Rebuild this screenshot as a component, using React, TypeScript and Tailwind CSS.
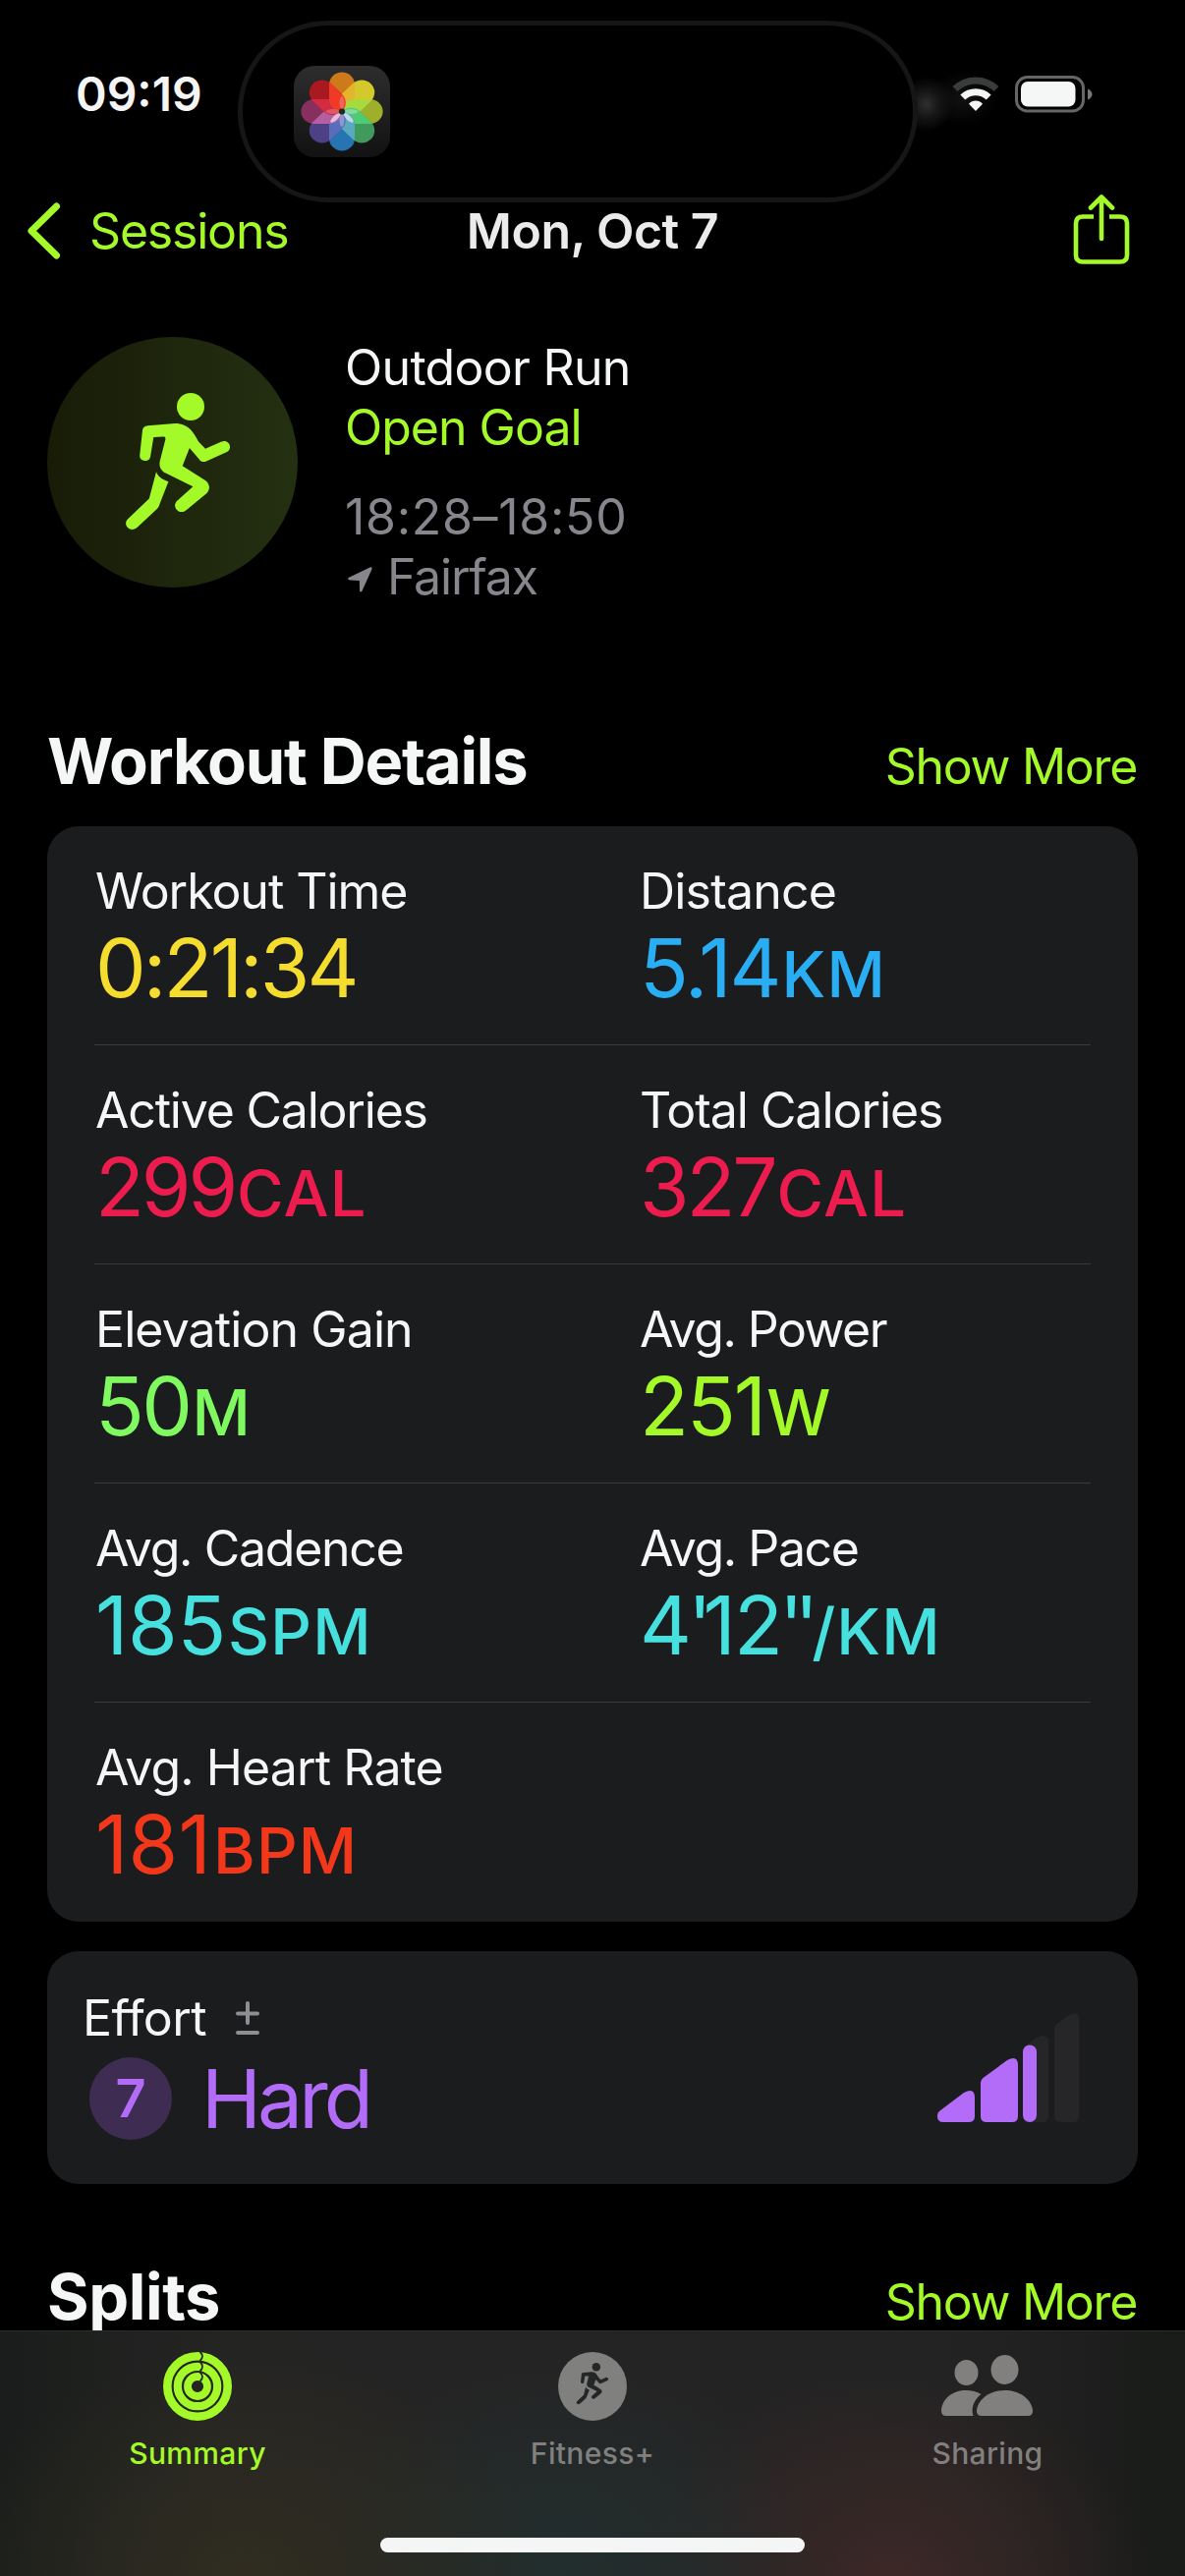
type Metric = {
  label: string;
  value: string;
  unit?: string;
  color: string;
  labelTracking?: string;
  valueTracking?: string;
};

const metricRows: Metric[][] = [
  [
    { label: "Workout Time", value: "0:21:34", color: "text-[#f5dd2f]", valueTracking: "tracking-[-2.9px]" },
    { label: "Distance", value: "5.14", unit: "KM", color: "text-[#29aef3]", labelTracking: "tracking-[-0.8px]" },
  ],
  [
    {
      label: "Active Calories",
      value: "299",
      unit: "CAL",
      color: "text-[#ec1c4f]",
      labelTracking: "tracking-[-1.2px]",
      valueTracking: "tracking-[-3.2px]",
    },
    { label: "Total Calories", value: "327", unit: "CAL", color: "text-[#ec1c4f]", valueTracking: "tracking-[-3.2px]" },
  ],
  [
    {
      label: "Elevation Gain",
      value: "50",
      unit: "M",
      color: "text-[#80f860]",
      labelTracking: "tracking-[-0.9px]",
      valueTracking: "tracking-[-2.6px]",
    },
    {
      label: "Avg. Power",
      value: "251",
      unit: "W",
      color: "text-[#a4f928]",
      labelTracking: "tracking-[-1.5px]",
    },
  ],
  [
    {
      label: "Avg. Cadence",
      value: "185",
      unit: "SPM",
      color: "text-[#46e1df]",
      labelTracking: "tracking-[-1.3px]",
      valueTracking: "tracking-[-0.3px]",
    },
    {
      label: "Avg. Pace",
      value: "4'12''",
      unit: "/KM",
      color: "text-[#46e1df]",
      labelTracking: "tracking-[-1.4px]",
    },
  ],
  [
    {
      label: "Avg. Heart Rate",
      value: "181",
      unit: "BPM",
      color: "text-[#f3371b]",
      labelTracking: "tracking-[-0.9px]",
      valueTracking: "tracking-[0.2px]",
    },
  ],
];

// "overlap" is the lens shared with the next petal clockwise
const petals = [
  { angle: 0, color: "#cf7a1a", overlap: "#e3b42e", shine: 0.22 },
  { angle: 45, color: "#d5c82a", overlap: "#a6da3e", shine: 0 },
  { angle: 90, color: "#9fae2b", overlap: "#4fcb72", shine: 0.3 },
  { angle: 135, color: "#3f9a5c", overlap: "#5ba9bf", shine: 0.6 },
  { angle: 180, color: "#2674b2", overlap: "#5a6dbb", shine: 0.3 },
  { angle: 225, color: "#4d4084", overlap: "#b45fa2", shine: 0.6 },
  { angle: 270, color: "#87305f", overlap: "#d22b42", shine: 0.22 },
  { angle: 315, color: "#a81a20", overlap: "#ef3b26", shine: 0 },
];

function PhotosIcon() {
  return (
    <svg width="98" height="93" viewBox="0 0 98 93">
      <defs>
        <linearGradient id="tile" x1="0" y1="0" x2="0" y2="1">
          <stop offset="0" stopColor="#2d2d2d" />
          <stop offset="1" stopColor="#121212" />
        </linearGradient>
        <clipPath id="next-petal">
          <rect x="-12.5" y="-40" width="25" height="40" rx="12.5" transform="rotate(45)" />
        </clipPath>
      </defs>
      <rect width="98" height="93" rx="21" fill="url(#tile)" />
      <g transform="translate(49 46.5) scale(1.04 1)">
        {petals.map((p) => (
          <rect key={p.angle} x="-12.5" y="-40" width="25" height="40" rx="12.5" fill={p.color} transform={`rotate(${p.angle})`} />
        ))}
        {petals.map((p) => (
          <g key={p.angle} transform={`rotate(${p.angle})`}>
            <rect x="-12.5" y="-40" width="25" height="40" rx="12.5" fill={p.overlap} clipPath="url(#next-petal)" />
          </g>
        ))}
        {petals.map((p) => (
          <ellipse
            key={p.angle}
            cy="-9"
            rx="2.4"
            ry="6.5"
            fill="#fff"
            fillOpacity={p.shine}
            transform={`rotate(${p.angle})`}
          />
        ))}
        <circle r="3" fill="#1c2a26" />
      </g>
    </svg>
  );
}

function RunnerShape() {
  return (
    <>
      <circle cx="146" cy="71" r="14" />
      <path d="M102.5 90.3 L130 88 C137 88 143 90.5 147 95.5 C150 99 152 103 154 106.500 L161 113.700 L177.500 106.500 C182 104.500 186.500 108 186 112.500 C185.700 115 184.500 116.200 182.400 117.300 L162 126.500 C159 127.800 156.500 127 154.700 124.500 L144.900 113 L137.700 131.300 L161 146 C165.500 149.500 166.300 154.500 162.500 159 L142.500 175.500 C139 179 134 178.800 131.500 175.500 C129.300 172.500 129.800 169.500 132 167 L148.400 152.300 L118.500 137.500 C114.500 134 113.800 130.500 114.800 126 L120.300 104.500 C120.600 102.200 120 101.300 118 101.400 L108.300 102 L105 122 C104.300 125 102.300 126.300 99.500 126 C96 125.700 94 123.500 94.200 120.500 L97 95 C97.400 92.200 99 90.600 102.500 90.300 Z" />
      <path d="M111 137.300 C112.500 141.500 116.500 145 123.400 147.300 L114.500 170 C114 172 113 173.600 111.800 175 L92 193.500 C88.700 196.800 84 196.600 81.500 193.500 C79.300 190.800 79.700 187.500 82.400 185 L103.800 164.500 Z" />
    </>
  );
}

function StatusIcons() {
  return (
    <div className="flex items-center">
      <svg width="48" height="36" viewBox="0 0 48 36" fill="none">
        <path d="M3 12.500 A30 30 0 0 1 45 12.500" stroke="#3a3b3b" strokeWidth="7" />
        <path d="M10.800 21 A19 19 0 0 1 37.200 21" stroke="#f5f5f5" strokeWidth="7" />
        <path d="M24 35 L17 27.700 A9.500 9.500 0 0 1 31 27.700 Z" fill="#f5f5f5" />
      </svg>
      <svg className="ml-4" width="79" height="38" viewBox="0 0 79 38">
        <rect x="1.500" y="1.500" width="68" height="34.500" rx="11" fill="none" stroke="#666" strokeWidth="3" />
        <rect x="6" y="6" width="55.500" height="25.500" rx="7" fill="#f5f6f6" />
        <path d="M74 13.500 C80 16 80 22 74 24.500 Z" fill="#777" />
      </svg>
    </div>
  );
}

function StatusBar() {
  return (
    <div className="relative h-[176px] shrink-0 flex items-start justify-between pl-[77px] pr-[94px] pt-[66px]">
      <span className="text-[48px] leading-[60px] font-semibold text-[#f5f5f5] tracking-[0px]">09:19</span>
      <div className="pt-[11px]">
        <div className="absolute left-[905px] top-[68px] w-[76px] h-[76px] bg-[radial-gradient(circle,#2f2f2f_0%,#151515_26%,transparent_52%)]" />
        <div className="absolute left-[945px] top-[72px] w-[70px] h-[56px] bg-[radial-gradient(ellipse,#121212_0%,transparent_70%)]" />
        <div className="relative">
          <StatusIcons />
        </div>
      </div>
      <div className="absolute left-[242px] top-[21px] w-[692px] h-[185px] rounded-[92px] border-[5px] border-[#151617] bg-black flex items-center pl-[52px]">
        <PhotosIcon />
      </div>
    </div>
  );
}

function NavBar() {
  return (
    <header className="relative grid grid-cols-3 items-center h-[118px] shrink-0 pl-[28px] pr-[56px]">
      <button type="button" className="flex items-center text-[#a4f928]">
        <svg width="34" height="58" viewBox="0 0 34 58" fill="none" stroke="currentColor" strokeWidth="7" strokeLinecap="round" strokeLinejoin="round">
          <path d="M29.500 4 L4 29 L29.500 54" />
        </svg>
        <span className="ml-[29px] text-[50px] leading-[60px] tracking-[-1.2px]">Sessions</span>
      </button>
      <h1 className="pl-[28px] text-center text-[50px] leading-[60px] font-semibold tracking-[-0.5px] text-[#ebebeb] whitespace-nowrap">
        Mon, Oct 7
      </h1>
      <svg className="justify-self-end mb-[2px]" width="58" height="72" viewBox="0 0 58 72" fill="none" stroke="#a4f928" strokeWidth="4.600" strokeLinecap="round" strokeLinejoin="round">
        <path d="M21 22.500 H10 Q3 22.500 3 29.500 V61.500 Q3 68.500 10 68.500 H48 Q55 68.500 55 61.500 V29.500 Q55 22.500 48 22.500 H37" strokeLinecap="butt" />
        <path d="M29 45 V3 M18 13.500 L29 2.500 L40 13.500" />
      </svg>
    </header>
  );
}

function WorkoutHero() {
  return (
    <section className="mt-[49px] flex gap-12 px-12 text-[50px] leading-[61px]">
      <div className="size-[255px] rounded-full bg-gradient-to-r from-[#181c07] to-[#243012]">
        <svg width="255" height="255" viewBox="0 0 255 255" fill="#a4f928">
          <RunnerShape />
        </svg>
      </div>
      <div className="pt-px text-[#87868d]">
        <p className="text-[#f5f6f6] tracking-[-0.7px]">Outdoor Run</p>
        <p className="text-[#a4f928] tracking-[-1px]">Open Goal</p>
        <p className="mt-[30px] tracking-[0.7px]">18:28–18:50</p>
        <p className="flex items-center tracking-[-1.2px]">
          <svg className="ml-[3px] mr-[15px] mt-[5px]" width="25" height="26" viewBox="0 0 25 26" fill="currentColor">
            <path d="M22.500 0.500 C24 0 25 1 24.400 2.500 L14.500 24.500 C13.800 26 12 25.700 12 24 L11.800 14 L2 13.500 C0 13.500 -0.500 11.500 1.200 10.700 Z" />
          </svg>
          Fairfax
        </p>
      </div>
    </section>
  );
}

function SectionHeader({ title, tracking }: { title: string; tracking: string }) {
  return (
    <div className="flex items-baseline justify-between pl-[48px] pr-[49px] whitespace-nowrap">
      <h2 className={`text-[65px] leading-[78px] font-bold text-[#f5f6f6] ${tracking}`}>{title}</h2>
      <button type="button" className="text-[50px] leading-[60px] tracking-[-1.3px] text-[#a4f928]">
        Show More
      </button>
    </div>
  );
}

function MetricCell({ metric }: { metric: Metric }) {
  return (
    <div className="pt-[36px] whitespace-nowrap">
      <p className={`text-[50px] leading-[60px] text-[#f5f6f6] ${metric.labelTracking ?? "tracking-[-1.05px]"}`}>
        {metric.label}
      </p>
      <p className={`mt-[7px] text-[82px] leading-[84px] ${metric.valueTracking ?? "tracking-[-2px]"} ${metric.color}`}>
        {metric.value.split(/('+)/).map((part, i) =>
          part.startsWith("'") ? (
            <span key={i} className="-ml-[2px] tracking-[-9px]">
              {part}
            </span>
          ) : (
            part
          )
        )}
        {metric.unit && <span className="ml-[2px] text-[65px] font-medium tracking-[1.2px]">{metric.unit}</span>}
      </p>
    </div>
  );
}

function EffortCard() {
  return (
    <section className="mx-12 mt-[30px] flex h-[237px] shrink-0 items-start justify-between rounded-[32px] bg-[#1b1c1e] pl-[36px] pr-[60px]">
      <div className="pt-[38px]">
        <div className="flex items-center text-[#f5f6f6]">
          <span className="text-[50px] leading-[60px] tracking-[-0.6px]">Effort</span>
          <svg className="ml-[29px]" width="26" height="36" viewBox="0 0 26 36" stroke="#8e8e93" strokeWidth="4" strokeLinecap="round">
            <path d="M13 3 V23 M3 13.500 H23 M3 33 H23" />
          </svg>
        </div>
        <div className="mt-[10px] flex items-start text-[#b26cf7]">
          <span className="ml-[7px] flex size-[84px] items-center justify-center rounded-full bg-[#3f2c52] text-[54px] leading-none font-semibold">
            7
          </span>
          <span className="ml-[30px] mt-px text-[82px] leading-[84px] tracking-[-3.9px]">Hard</span>
        </div>
      </div>
      <svg className="mt-[63px]" width="144" height="111" viewBox="0 0 144 111">
        <g fill="#262628">
          <path d="M88 34 L101 25 Q113 19 113 31 V105 Q113 111 107 111 H88 Z" />
          <path d="M119 16 Q119 13 121.500 11 L134 2 Q144 -3 144 7 V105 Q144 111 138 111 H125 Q119 111 119 105 Z" />
        </g>
        <g fill="#b26cf7">
          <path d="M0 104 Q0 101 2.500 99.500 L27 81 Q38 75 38 86 V105 Q38 111 32 111 H6 Q0 111 0 105 Z" />
          <path d="M44 71 Q44 68 46.500 66 L71 48 Q82 42.500 82 53 V105 Q82 111 76 111 H50 Q44 111 44 105 Z" />
          <rect x="87" y="32.500" width="14" height="78.500" rx="7" />
        </g>
      </svg>
    </section>
  );
}

function RingsIcon() {
  return (
    <svg width="70" height="70" viewBox="0 0 70 70" fill="none">
      <g stroke="#a4f928">
        <circle cx="35" cy="35" r="30.700" strokeWidth="8.600" />
        <circle cx="35" cy="35" r="20.200" strokeWidth="8.200" />
        <circle cx="35" cy="35" r="10" strokeWidth="7.800" />
      </g>
      <g stroke="#262623" strokeWidth="1.800">
        <path d="M37.500 0 Q42.500 4 37.500 9" />
        <path d="M37.500 10 Q42.500 14.500 37.500 19.500" />
        <path d="M37.500 20.500 Q42.500 25 37.500 30" />
      </g>
    </svg>
  );
}

function FitnessIcon() {
  return (
    <svg width="70" height="70" viewBox="0 0 70 70">
      <circle cx="35" cy="35" r="35" fill="#80807f" />
      <g fill="#242627" transform="translate(-5.700 -6.500) scale(0.305)">
        <RunnerShape />
      </g>
    </svg>
  );
}

function SharingIcon() {
  return (
    <svg width="94" height="64" viewBox="0 0 94 64" fill="#82807f">
      <ellipse cx="25.500" cy="18" rx="12" ry="13" />
      <ellipse cx="64.500" cy="15" rx="14" ry="15" />
      <path d="M5 62 Q0 62 0 56.500 C1 44 12 36 25 36 C31 36 36 37.500 40.500 40 C33 46 30 54 32.500 62 Z" />
      <path d="M41 62 Q35.500 62 36 56 C38 44 50 36 64.500 36 C79 36 91 44 93 56 Q93.500 62 88 62 Z" />
    </svg>
  );
}

const tabs = [
  { label: "Summary", icon: <RingsIcon />, color: "text-[#a4f928]" },
  { label: "Fitness+", icon: <FitnessIcon />, color: "text-[#80807f]" },
  { label: "Sharing", icon: <SharingIcon />, color: "text-[#82807f]" },
];

function TabBar() {
  return (
    <nav className="relative h-[250px] shrink-0 border-t border-[#2b2c2c] bg-[radial-gradient(ellipse_300px_230px_at_250px_250px,#302d20_0%,transparent_100%),radial-gradient(ellipse_260px_220px_at_570px_250px,#222f2e_0%,transparent_100%),radial-gradient(ellipse_260px_210px_at_910px_250px,#3c2827_0%,transparent_100%),linear-gradient(to_right,#1a1d1b,#242423_18%,#252425_50%,#232323_80%,#191b19)]">
      <div className="grid h-[210px] grid-cols-3">
        {tabs.map((tab) => (
          <div key={tab.label} className={`flex flex-col items-center pt-[21px] ${tab.color}`}>
            <div className="flex h-[70px] items-center">{tab.icon}</div>
            <span className="mt-[15px] text-[30px] leading-[36px] font-medium tracking-[0.35px]">{tab.label}</span>
          </div>
        ))}
      </div>
      <div className="mx-auto h-[15px] w-[432px] rounded-full bg-[#f4f6f5]" />
    </nav>
  );
}

export default function App() {
  return (
    <div className="flex h-[2622px] w-[1206px] flex-col overflow-hidden bg-black font-['Inter','Liberation_Sans',sans-serif]">
      <main className="flex min-h-0 flex-1 flex-col">
        <StatusBar />
        <NavBar />
        <WorkoutHero />

        <div className="mt-[118px]">
          <SectionHeader title="Workout Details" tracking="tracking-[-1.2px]" />
        </div>
        <section className="mx-12 mt-[27px] shrink-0 rounded-[32px] bg-[#1b1c1e] px-12">
          {metricRows.map((row, i) => (
            <div
              key={row[0].label}
              className={`grid h-[223px] grid-cols-[554px_1fr] pl-px ${i < metricRows.length - 1 ? "border-b border-[#3a3b3d]" : ""}`}
            >
              {row.map((metric) => (
                <MetricCell key={metric.label} metric={metric} />
              ))}
            </div>
          ))}
        </section>

        <EffortCard />

        <div className="mt-[76px]">
          <SectionHeader title="Splits" tracking="tracking-[-0.4px]" />
        </div>
      </main>
      <TabBar />
    </div>
  );
}
